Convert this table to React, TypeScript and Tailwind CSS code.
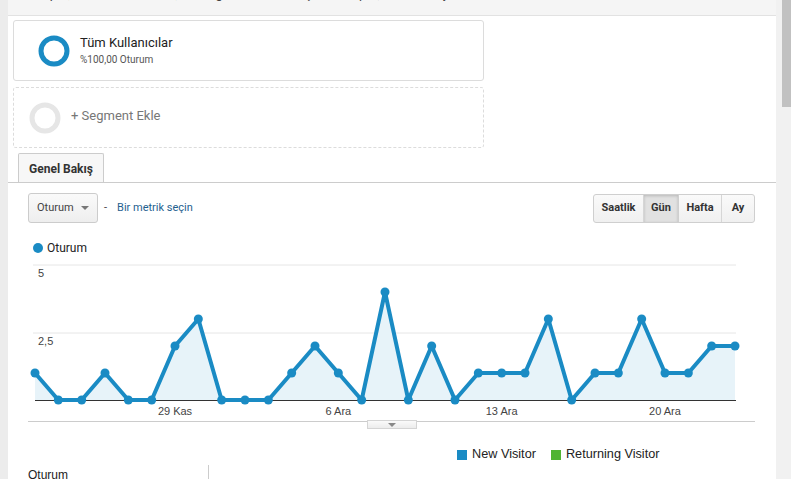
import React from "react"

const VALUES = [1, 0, 0, 1, 0, 0, 2, 3, 0, 0, 0, 1, 2, 1, 0, 4, 0, 2, 0, 1, 1, 1, 3, 0, 1, 1, 3, 1, 1, 2, 2]

const X0 = 7
const STEP = 700 / 30
const BASE = 142
const UNIT = 27

const X_LABELS = [
  { i: 6, text: "29 Kas" },
  { i: 13, text: "6 Ara" },
  { i: 20, text: "13 Ara" },
  { i: 27, text: "20 Ara" },
]

function Donut({ color }: { color: string }) {
  return (
    <svg width="32" height="32" viewBox="0 0 32 32" className="shrink-0">
      <circle cx="16" cy="16" r="13" fill="none" stroke={color} strokeWidth="5" />
    </svg>
  )
}

function SessionsChart() {
  const pts = VALUES.map((v, i) => [X0 + i * STEP, BASE - v * UNIT])
  const line = pts.map((p) => p.join(",")).join(" ")
  const area = `${X0},${BASE} ${line} ${X0 + 30 * STEP},${BASE}`

  return (
    <svg width="736" height="163" viewBox="0 0 736 163" className="ml-[20px] mt-[3px] block shrink-0">
      <line x1="5" y1="7" x2="708" y2="7" stroke="#e6e6e6" strokeWidth="1" />
      <line x1="5" y1="75" x2="708" y2="75" stroke="#e6e6e6" strokeWidth="1" />
      <polygon points={area} fill="#e7f3f9" />
      <line x1="7" y1="142.5" x2="708" y2="142.5" stroke="#333" strokeWidth="1" />
      <polyline points={line} fill="none" stroke="#1a8bc4" strokeWidth="4" strokeLinejoin="round" />
      {pts.map(([x, y], i) => (
        <circle key={i} cx={x} cy={y} r="4.5" fill="#1a8bc4" />
      ))}
      <g fontFamily="'Liberation Sans', Arial, sans-serif" fontSize="11" fill="#444">
        <text x="10" y="19">5</text>
        <text x="10" y="87">2,5</text>
        {X_LABELS.map((l) => (
          <text key={l.text} x={X0 + l.i * STEP} y="157" textAnchor="middle">
            {l.text}
          </text>
        ))}
      </g>
    </svg>
  )
}

export default function App() {
  return (
    <div className="flex w-[791px] h-[479px] overflow-hidden bg-white font-['Roboto','Liberation_Sans',sans-serif]">
      <div className="w-[8px] shrink-0 bg-[#ececec]" />

      <div className="flex-1 min-w-0 flex flex-col overflow-hidden">
        {/* top info bar, mostly scrolled off */}
        <div className="h-[16px] shrink-0 overflow-hidden bg-[#f5f5f5] border-b border-[#e2e2e2]">
          <div className="-mt-[15px] pl-[12px] text-[13px] leading-[18px] text-[#444] whitespace-nowrap">
            Bu rapor, oturumların %100,00'ına göre hazırlanmıştır. Bu rapor, verilere dayanmaktadır.
          </div>
        </div>

        {/* segments */}
        <div className="shrink-0 pt-[4px] pl-[5px] w-[476px] flex flex-col gap-[6px]">
          <div className="h-[61px] border border-[#dcdcdc] rounded-[3px] flex items-center pl-[24px] gap-[10px]">
            <Donut color="#1a8bc4" />
            <div className="flex flex-col mt-[1px]">
              <span className="text-[13px] text-[#222] leading-[17px]">Tüm Kullanıcılar</span>
              <span className="text-[10px] text-[#555] leading-[17px]">%100,00 Oturum</span>
            </div>
          </div>
          <div className="h-[61px] border border-dashed border-[#dcdcdc] rounded-[3px] flex items-center pl-[15px] gap-[10px]">
            <Donut color="#e6e6e6" />
            <span className="text-[13px] text-[#777] -mt-[3px]">+ Segment Ekle</span>
          </div>
        </div>

        {/* tabs */}
        <div className="shrink-0 mt-[5px] pl-[10px] border-b border-[#cccccc] flex">
          <div className="w-[86px] h-[29px] border border-b-0 border-[#cccccc] rounded-t-[2px] bg-[#f7f7f7] flex items-center justify-center pt-[1px] text-[12px] font-bold text-[#333]">
            Genel Bakış
          </div>
        </div>

        {/* controls */}
        <div className="shrink-0 mt-[10px] pl-[20px] pr-[21px] flex items-center justify-between">
          <div className="flex items-center">
            <div className="w-[70px] h-[30px] border border-[#cccccc] rounded-[3px] bg-gradient-to-b from-[#fafafa] to-[#eeeeee] flex items-center justify-between pl-[8px] pr-[8px]">
              <span className="text-[11px] text-[#444]">Oturum</span>
              <span className="w-0 h-0 border-l-[4px] border-r-[4px] border-t-[4px] border-l-transparent border-r-transparent border-t-[#777]" />
            </div>
            <span className="ml-[6px] text-[11px] text-[#444]">-</span>
            <span className="ml-[10px] text-[11px] text-[#1f5f8f]">Bir metrik seçin</span>
          </div>
          <div className="flex h-[29px] border border-[#cfcfcf] rounded-[3px] overflow-hidden text-[11px] font-bold text-[#333] bg-gradient-to-b from-[#fafafa] to-[#f0f0f0]">
            <div className="w-[50px] flex items-center justify-center border-r border-[#d6d6d6]">Saatlik</div>
            <div className="w-[35px] flex items-center justify-center border-r border-[#cfcfcf] bg-[#e1e1e1] shadow-[inset_0_1px_3px_rgba(0,0,0,0.18)]">Gün</div>
            <div className="w-[43px] flex items-center justify-center border-r border-[#d6d6d6]">Hafta</div>
            <div className="w-[32px] flex items-center justify-center">Ay</div>
          </div>
        </div>

        {/* metric legend */}
        <div className="shrink-0 mt-[18px] pl-[25px] flex items-center gap-[4px] h-[14px]">
          <span className="w-[10px] h-[10px] rounded-full bg-[#1a8bc4]" />
          <span className="text-[12px] text-[#222]">Oturum</span>
        </div>

        <SessionsChart />

        {/* collapse handle */}
        <div className="shrink-0 relative ml-[20px] w-[727px] border-t border-[#cccccc]">
          <div className="absolute left-[339px] -top-[2px] w-[50px] h-[9px] border border-[#d4d4d4] bg-gradient-to-b from-[#fafafa] to-[#ececec] flex items-center justify-center">
            <span className="w-0 h-0 border-l-[4px] border-r-[4px] border-t-[4px] border-l-transparent border-r-transparent border-t-[#888]" />
          </div>
        </div>

        {/* visitor legend */}
        <div className="shrink-0 mt-[26px] pl-[449px] flex items-center h-[14px] font-['Liberation_Sans',Arial,sans-serif] text-[12.7px] text-[#222]">
          <span className="w-[10px] h-[10px] bg-[#1a8bc4]" />
          <span className="ml-[5px]">New Visitor</span>
          <span className="ml-[15px] w-[10px] h-[10px] bg-[#50b432]" />
          <span className="ml-[5px]">Returning Visitor</span>
        </div>

        {/* table header */}
        <div className="shrink-0 mt-[3px] ml-[20px] w-[181px] h-[20px] border-r border-[#cccccc] pt-[1px] text-[12px] text-[#222] font-['Liberation_Sans',Arial,sans-serif]">
          Oturum
        </div>
      </div>

      <div className="w-[6px] shrink-0 bg-[#f1f1f1]" />
      <div className="w-[9px] shrink-0 bg-[#f1f1f1]">
        <div className="h-[107px] bg-[#c1c1c1]" />
      </div>
    </div>
  )
}
